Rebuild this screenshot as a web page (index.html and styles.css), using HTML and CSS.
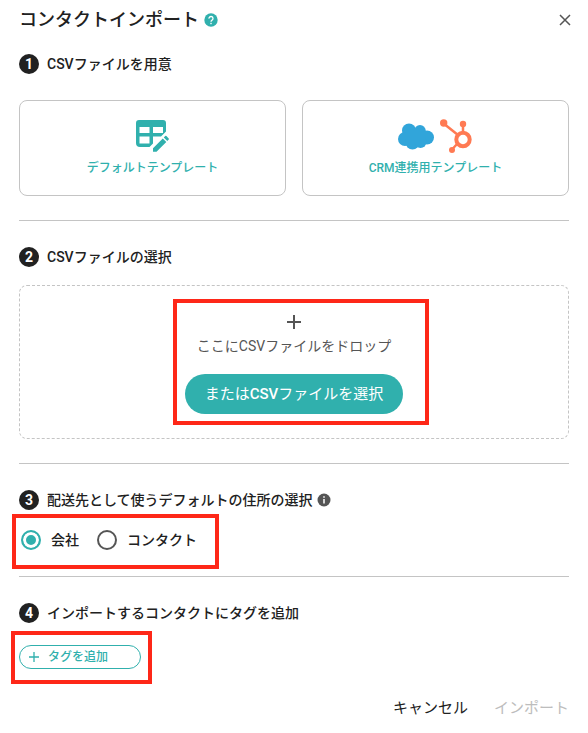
FILE: index.html
```html
<!DOCTYPE html>
<html lang="ja">
<head>
    <meta charset="UTF-8" />
    <meta name="viewport" content="width=device-width, initial-scale=1.0" />
    <title>コンタクトインポート</title>
    <link rel="stylesheet" href="styles.css">
</head>
<body>
<main class="dialog">
    <header class="dialog-header">
        <h1>コンタクトインポート</h1>
        <button type="button" class="icon-btn" aria-label="ヘルプ">
            <svg width="14" height="14" viewBox="0 0 14 14">
                <circle cx="7" cy="7" r="6.7" fill="#30b0ad" />
                <path d="M5 5.6a2 2 0 1 1 3.2 1.5C7.400 7.700 7 8 7 8.800" fill="none" stroke="#fff" stroke-width="1.300" />
                <rect x="6.300" y="9.800" width="1.400" height="1.400" fill="#fff" />
            </svg>
        </button>
        <button type="button" class="icon-btn close-btn" aria-label="閉じる">
            <svg width="12" height="12" viewBox="0 0 12 12">
                <path d="M1 1l10 10M11 1L1 11" stroke="#555" stroke-width="1.500" />
            </svg>
        </button>
    </header>

    <section class="step">
        <h2><span class="step-number">1</span>CSVファイルを用意</h2>
        <div class="templates">
            <button type="button" class="template">
                <svg width="36" height="34" viewBox="0 0 36 34">
                    <path fill="#30b0ad" fill-rule="evenodd" d="M4 1H28a3 3 0 0 1 3 3V12.500L26 17.500H18V24.500L14.500 28H5a4 4 0 0 1-4-4V4a3 3 0 0 1 3-3ZM4.500 8V14H14.500V8ZM18 8V14H28V8ZM4.500 17.500V24.500H14.500V17.500Z" />
                    <path fill="#30b0ad" d="M18 29.300L27.800 19.500 31.300 23 21.500 32.800H18ZM28.800 18.500L30.200 17.100Q30.800 16.500 31.400 17.100L33.700 19.400Q34.300 20 33.700 20.600L32.300 22Z" />
                </svg>
                <span>デフォルトテンプレート</span>
            </button>
            <button type="button" class="template">
                <span class="logos">
                    <svg width="36" height="34" viewBox="0 0 36 34">
                        <g fill="#31a5da">
                            <circle cx="11" cy="11.500" r="7" />
                            <circle cx="22" cy="11.800" r="5.800" />
                            <circle cx="7" cy="20" r="7" />
                            <circle cx="29" cy="18.500" r="7" />
                            <circle cx="14.500" cy="23.500" r="7" />
                            <circle cx="22.500" cy="23" r="6" />
                            <path d="M8 10H27V24H8Z" />
                        </g>
                    </svg>
                    <svg width="34" height="34" viewBox="0 0 34 34">
                        <g fill="none" stroke="#ff7a53">
                            <path d="M3 4L18 16M23 5V13M18 24L11.500 31" stroke-width="2.500" />
                            <circle cx="23" cy="20.500" r="6.700" stroke-width="4" />
                        </g>
                        <g fill="#ff7a53">
                            <circle cx="3.700" cy="4" r="3.700" />
                            <circle cx="23" cy="5" r="3.200" />
                            <circle cx="12" cy="31" r="3" />
                        </g>
                    </svg>
                </span>
                <span>CRM連携用テンプレート</span>
            </button>
        </div>
    </section>

    <section class="step">
        <h2><span class="step-number">2</span>CSVファイルの選択</h2>
        <div class="drop-zone">
            <div class="drop-content highlight">
                <svg width="16" height="16" viewBox="0 0 16 16">
                    <path d="M8 1V15M1 8H15" stroke="#555" stroke-width="2" />
                </svg>
                <p>ここにCSVファイルをドロップ</p>
                <button type="button" class="select-btn">または<b>CSV</b>ファイルを選択</button>
            </div>
        </div>
    </section>

    <section class="step step-address">
        <h2>
            <span class="step-number">3</span>配送先として使うデフォルトの住所の選択
            <svg class="info" width="14" height="14" viewBox="0 0 14 14">
                <circle cx="7" cy="7" r="6.500" fill="#555" />
                <path d="M7 6V10.500M7 3.300V4.800" stroke="#fff" stroke-width="1.500" />
            </svg>
        </h2>
        <div class="radios highlight">
            <label><input type="radio" name="address" value="company" checked />会社</label>
            <label><input type="radio" name="address" value="contact" />コンタクト</label>
        </div>
    </section>

    <section class="step step-tags">
        <h2><span class="step-number">4</span>インポートするコンタクトにタグを追加</h2>
        <div class="tags highlight">
            <button type="button" class="tag-btn">
                <svg width="10" height="10" viewBox="0 0 10 10">
                    <path d="M5 0V10M0 5H10" stroke="#30b0ad" stroke-width="1.300" />
                </svg>
                タグを追加
            </button>
        </div>
    </section>

    <footer class="dialog-footer">
        <button type="button" class="text-btn">キャンセル</button>
        <button type="button" class="text-btn" disabled>インポート</button>
    </footer>
</main>
</body>
</html>
```
FILE: styles.css
```css
:root {
    --primary-color: #30b0ad;
    --text-color: #212121;
    --text-secondary: #555;
    --border-color: #c4c4c4;
    --highlight-color: #fe2718;
}

* {
    box-sizing: border-box;
    margin: 0;
    padding: 0;
}

body {
    font-family: Roboto, "Noto Sans CJK JP", sans-serif;
    font-size: 14px;
    line-height: 20px;
    background: #fff;
    color: var(--text-color);
}

button {
    font-family: inherit;
    background: none;
    border: none;
    cursor: pointer;
}

svg {
    display: block;
    flex: none;
}

.dialog {
    padding: 6px 19px 12px;
}

.dialog-header {
    display: flex;
    align-items: center;
    gap: 5px;
    height: 28px;
}

h1 {
    font-size: 18px;
    line-height: 28px;
    font-weight: 500;
}

.close-btn {
    margin-left: auto;
    margin-right: -2px;
}

.step {
    padding: 26px 0 24px;
    border-bottom: 1px solid var(--border-color);
}

.dialog-header + .step {
    padding-top: 20px;
}

h2 {
    display: flex;
    align-items: center;
    font-size: 14px;
    line-height: 20px;
    font-weight: 500;
}

.step-number {
    width: 20px;
    height: 20px;
    margin-right: 8px;
    border-radius: 50%;
    background: var(--text-color);
    color: #fff;
    font-weight: 700;
    text-align: center;
}

.info {
    margin-left: 4px;
}

.templates {
    display: grid;
    grid-template-columns: 1fr 1fr;
    gap: 16px;
    margin-top: 26px;
}

.template {
    display: flex;
    flex-direction: column;
    align-items: center;
    height: 96px;
    padding-top: 18px;
    gap: 5px;
    border: 1px solid var(--border-color);
    border-radius: 8px;
    color: var(--primary-color);
    font-size: 12px;
    line-height: 20px;
    font-weight: 500;
}

.logos {
    display: flex;
    gap: 6px;
}

/* 強調枠 */
.highlight {
    position: relative;
}

.highlight::after {
    content: "";
    position: absolute;
    border: 4px solid var(--highlight-color);
    pointer-events: none;
}

.drop-zone {
    display: flex;
    justify-content: center;
    margin-top: 18px;
    padding: 28px 0 24px;
    border: 1px dashed var(--border-color);
    border-radius: 8px;
}

.drop-content {
    display: flex;
    flex-direction: column;
    align-items: center;
    color: var(--text-secondary);
}

.drop-content p {
    margin: 6px 0 18px;
}

.drop-content::after {
    inset: -15px -26px -11px -12px;
}

.select-btn {
    height: 40px;
    padding: 0 20px 4px;
    border-radius: 20px;
    background: var(--primary-color);
    color: #fff;
    font-size: 15px;
}

.select-btn b {
    font-weight: 500;
}

.radios {
    display: flex;
    gap: 18px;
    width: fit-content;
    margin-top: 20px;
    padding-left: 2px;
    font-weight: 500;
}

.radios::after {
    inset: -16px -22px -19px -7px;
}

.radios label {
    display: flex;
    align-items: center;
    gap: 10px;
}

.radios input {
    appearance: none;
    width: 20px;
    height: 20px;
    border: 2px solid var(--text-secondary);
    border-radius: 50%;
}

.radios input:checked {
    border-color: var(--primary-color);
    background: var(--primary-color);
    box-shadow: inset 0 0 0 3px #fff;
}

.step-address {
    padding-bottom: 26px;
}

.step-tags {
    padding-bottom: 0;
    border-bottom: none;
}

.tags {
    width: fit-content;
    margin-top: 22px;
}

.tags::after {
    inset: -14px -11px -15px -8px;
}

.tag-btn {
    display: flex;
    align-items: center;
    gap: 9px;
    height: 24px;
    padding: 0 32px 0 9px;
    border: 1px solid var(--primary-color);
    border-radius: 12px;
    color: var(--primary-color);
    font-size: 12px;
    line-height: 20px;
    font-weight: 500;
}

.dialog-footer {
    display: flex;
    justify-content: flex-end;
    gap: 26px;
    margin-top: 28px;
}

.text-btn {
    color: var(--text-color);
    font-size: 15px;
    line-height: 22px;
}

.text-btn:disabled {
    color: #bdbdbd;
    cursor: default;
}
```
